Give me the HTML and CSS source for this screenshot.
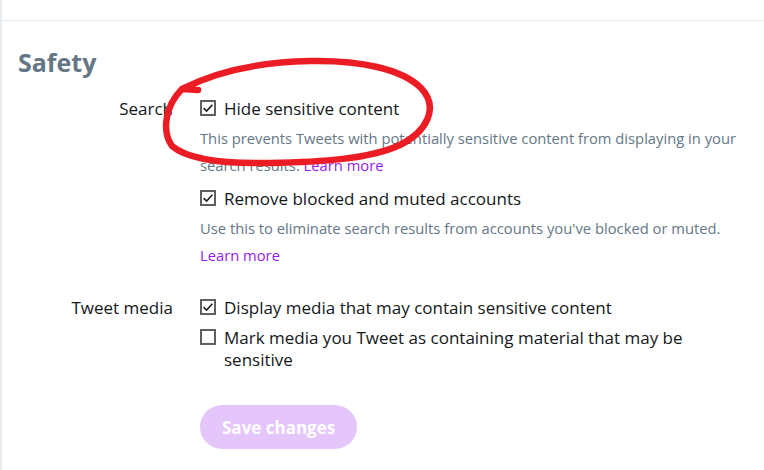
FILE: index.html
```html
<!DOCTYPE html>
<html lang="en">
<head>
<meta charset="utf-8">
<title>Safety settings</title>
<link rel="stylesheet" href="styles.css">
</head>
<body>
<div class="frame">
  <div class="topbar"></div>
  <div class="content">
    <h2 class="heading">Safety</h2>
    <div class="settings">
      <div class="label">Search</div>
      <div class="options">
        <div class="check-row">
          <svg class="box" width="16" height="16" viewBox="0 0 16 16"><rect x="1" y="1" width="14" height="14" fill="#fff" stroke="#5f5f5f" stroke-width="2"/><polyline points="3.6,8.2 6.6,11 12.4,4.8" fill="none" stroke="#1e1e1e" stroke-width="1.6"/></svg>
          <span class="check-text">Hide sensitive content</span>
        </div>
        <p class="desc">This prevents Tweets with potentially sensitive content from displaying in your search results. <a class="link" href="#">Learn more</a></p>
        <div class="check-row">
          <svg class="box" width="16" height="16" viewBox="0 0 16 16"><rect x="1" y="1" width="14" height="14" fill="#fff" stroke="#5f5f5f" stroke-width="2"/><polyline points="3.6,8.2 6.6,11 12.4,4.8" fill="none" stroke="#1e1e1e" stroke-width="1.6"/></svg>
          <span class="check-text">Remove blocked and muted accounts</span>
        </div>
        <p class="desc">Use this to eliminate search results from accounts you've blocked or muted. <a class="link" href="#">Learn more</a></p>
      </div>

      <div class="label section">Tweet media</div>
      <div class="options section">
        <div class="check-row">
          <svg class="box" width="16" height="16" viewBox="0 0 16 16"><rect x="1" y="1" width="14" height="14" fill="#fff" stroke="#5f5f5f" stroke-width="2"/><polyline points="3.6,8.2 6.6,11 12.4,4.8" fill="none" stroke="#1e1e1e" stroke-width="1.6"/></svg>
          <span class="check-text">Display media that may contain sensitive content</span>
        </div>
        <div class="check-row">
          <svg class="box" width="16" height="16" viewBox="0 0 16 16"><rect x="1" y="1" width="14" height="14" fill="#fff" stroke="#5f5f5f" stroke-width="2"/></svg>
          <span class="check-text">Mark media you Tweet as containing material that may be sensitive</span>
        </div>
        <button class="save" type="button">Save changes</button>
      </div>
    </div>
  </div>
  <svg class="scribble" width="764" height="470" viewBox="0 0 764 470">
    <path d="M198 90 L182 89 C 215 72, 260 62, 310 61 C 360 60, 402 69, 421 88 C 440 108, 426 132, 400 145 C 370 159, 320 162, 270 163 C 220 164, 186 158, 172 146 C 161 130, 166 105, 182 89" fill="none" stroke="#ec1c24" stroke-width="6.5" stroke-linecap="round" stroke-linejoin="round"/>
  </svg>
</div>
</body>
</html>
```

FILE: styles.css
```css
html, body {
  margin: 0;
  padding: 0;
  background: #ffffff;
}

body {
  font-family: "Open Sans", "Noto Sans", sans-serif;
  color: #14171a;
}

.frame {
  position: relative;
  min-height: 470px;
  border-left: 2px solid #e6ecf0;
  box-sizing: border-box;
}

.topbar {
  height: 20px;
  border-bottom: 1px solid #e6ecf0;
}

.content {
  padding: 0 19px 0 16px;
}

.heading {
  margin: 26px 0 0;
  font-size: 25px;
  line-height: 30px;
  font-weight: 700;
  color: #657786;
}

.settings {
  display: grid;
  grid-template-columns: 155px 1fr;
  column-gap: 27px;
  margin-top: 21px;
}

.label {
  text-align: right;
  font-size: 17px;
  line-height: 22px;
}

.section {
  margin-top: 28px;
}

.options {
  display: flex;
  flex-direction: column;
  align-items: flex-start;
}

.check-row {
  display: flex;
  align-items: flex-start;
  gap: 8px;
  font-size: 17px;
  line-height: 22px;
}

.check-row + .check-row {
  margin-top: 8px;
}

.desc + .check-row {
  margin-top: 9px;
}

.box {
  flex: none;
  margin-top: 2px;
}

.desc {
  margin: 5px 0 0;
  font-size: 14.75px;
  line-height: 27px;
  color: #657786;
}

.link {
  color: #981ceb;
  text-decoration: none;
}

.save {
  margin-top: 34px;
  height: 44px;
  padding: 0 22px;
  border: none;
  border-radius: 22px;
  background: #e5c6fa;
  color: #ffffff;
  font-family: "Open Sans", "Noto Sans", sans-serif;
  font-size: 17px;
  font-weight: 700;
}

.scribble {
  position: absolute;
  left: -2px;
  top: 0;
  pointer-events: none;
}
```
